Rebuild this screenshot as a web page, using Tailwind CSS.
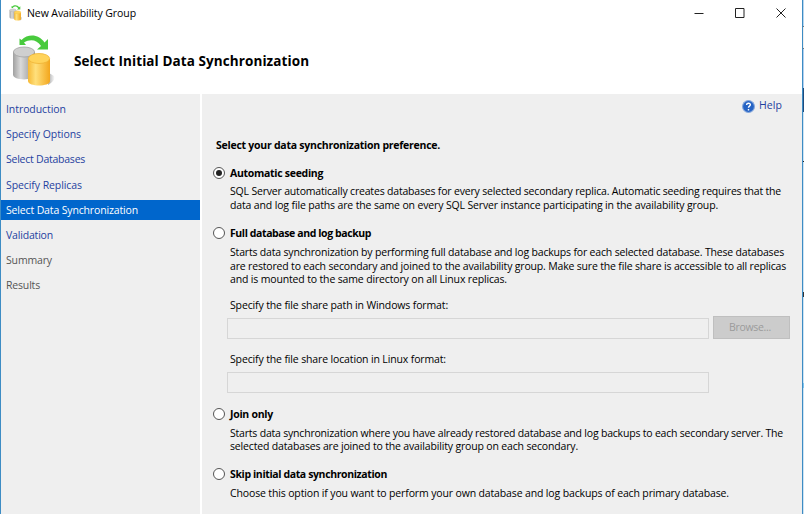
<!DOCTYPE html>
<html lang="en">
<head>
<meta charset="utf-8">
<title>New Availability Group</title>
<script src="https://cdn.jsdelivr.net/npm/@tailwindcss/browser@4"></script>
</head>
<body class="h-[514px] w-[804px] overflow-hidden bg-white font-['Open_Sans','Noto_Sans',sans-serif] text-[10.5px] leading-[13.5px] text-black">
<div class="flex h-[514px] w-[804px]">
  <div class="flex w-[803px] flex-col border-x border-[#3d8cc4]">
    <header class="flex h-[94px] flex-col bg-white">
      <div class="flex h-[26px] items-center">
        <svg class="ml-2 h-[16px] w-[14px]" viewBox="0 0 44 52"><use href="#db"/></svg>
        <h1 class="ml-[4px] mt-[2px] whitespace-nowrap tracking-[-0.08px]">New Availability Group</h1>
        <svg class="ml-auto mr-[14px] h-[12px] w-[94px]" viewBox="0 0 94 12" fill="none" stroke="#222" stroke-width="1"><path d="M0.500 6.500h9M41.500 1.500h8.500v9h-8.500zM82.500 1.500l9 9M91.500 1.500l-9 9"/></svg>
      </div>
      <div class="flex h-[68px] items-start">
        <svg class="ml-[11px] mt-[9px] h-[52px] w-[44px]" viewBox="0 0 44 52">
          <defs>
            <linearGradient id="g"><stop offset="0" stop-color="#a0a0a0"/><stop offset=".35" stop-color="#dadada"/><stop offset="1" stop-color="#8c8c8c"/></linearGradient>
            <linearGradient id="y"><stop offset="0" stop-color="#f6b936"/><stop offset=".35" stop-color="#ffe07c"/><stop offset="1" stop-color="#f3a61c"/></linearGradient>
            <linearGradient id="s"><stop offset="0" stop-color="#a8a8a8"/><stop offset="1" stop-color="#fff"/></linearGradient>
          </defs>
          <g id="db">
            <path d="M36 50Q45 44 42 41L37 38z" fill="url(#s)"/>
            <path d="M1 17v22.500c0 6.500 22 6.500 22 0V17z" fill="url(#g)"/>
            <ellipse cx="12" cy="17" rx="10.600" ry="5" fill="#cfcfcf" stroke="#a3a3a3" stroke-width=".8"/>
            <path d="M16 24v22c0 6 22 6 22 0V24z" fill="url(#y)"/>
            <ellipse cx="27" cy="23.500" rx="10.600" ry="5" fill="#ffd35a" stroke="#efb436" stroke-width=".8"/>
            <path d="M7.500 3.500v6.500h6.500l-2-2.500c6-4 13-3 17 3.500l-4 3.500H36V4l-3.500 3.500C27-1 16-1.500 9.500 5z" fill="#48ca3d"/>
          </g>
        </svg>
        <h2 class="ml-[18px] mt-[26px] whitespace-nowrap text-[13.5px] font-bold leading-[18px] tracking-[0.09px] text-black">Select Initial Data Synchronization</h2>
      </div>
    </header>
    <div class="flex h-[420px]">
      <nav class="flex w-[199px] shrink-0 flex-col gap-[5.2px] whitespace-nowrap bg-[#efefef] pt-[5px] leading-[20px] text-[#1f3fa0]">
        <a class="h-[20px] pl-[5px] tracking-[-0.07px]">Introduction</a>
        <a class="h-[20px] pl-[5px] tracking-[-0.07px]">Specify Options</a>
        <a class="h-[20px] pl-[5px] tracking-[-0.24px]">Select Databases</a>
        <a class="h-[20px] pl-[5px] tracking-[-0.08px]">Specify Replicas</a>
        <a class="h-[20px] bg-[#0066cc] pl-[5px] tracking-[-0.15px] text-white">Select Data Synchronization</a>
        <a class="h-[20px] pl-[5px] tracking-[-0.18px]">Validation</a>
        <a class="h-[20px] pl-[5px] tracking-[-0.15px] text-[#555]">Summary</a>
        <a class="h-[20px] pl-[5px] tracking-[-0.17px] text-[#555]">Results</a>
      </nav>
      <main class="ml-[2px] min-w-0 flex-1 whitespace-nowrap bg-[#efefef]">
        <div class="flex h-[24px] items-center justify-end pr-[20px] text-[#1f3fa0]">
          <svg class="mr-[4px] h-[13px] w-[13px]" viewBox="0 0 12 12"><circle cx="6" cy="6" r="5.500" fill="#2563c4" stroke="#87a9dd"/><path d="M4.200 4.600C4.300 2.300 8 2.500 7.700 4.600 7.500 5.700 6 5.700 6 7.200M6 8.300v1.300" stroke="#fff" stroke-width="1.300" fill="none"/></svg>
          <span class="tracking-[0.07px]">Help</span>
        </div>
        <h3 class="ml-[14px] mt-[19px] h-[16px] font-bold leading-[16px] tracking-[-0.25px] text-black">Select your data synchronization preference.</h3>
        <section class="ml-[11px] mt-[12px]">
          <h4 class="flex h-[16px] items-center font-bold leading-[16px] tracking-[-0.295px] text-black"><i class="mr-[5px] flex h-[12px] w-[12px] items-center justify-center rounded-full border border-[#555] bg-white"><b class="h-[6px] w-[6px] rounded-full bg-[#222]"></b></i>Automatic seeding</h4>
          <p class="ml-[17px] mt-[4px]"><span class="tracking-[-0.185px]">SQL Server automatically creates databases for every selected secondary replica. Automatic seeding requires that the</span><br><span class="tracking-[-0.145px]">data and log file paths are the same on every SQL Server instance participating in the availability group.</span></p>
        </section>
        <section class="ml-[11px] mt-[13px]">
          <h4 class="flex h-[16px] items-center font-bold leading-[16px] tracking-[-0.4px] text-black"><i class="mr-[5px] h-[12px] w-[12px] rounded-full border border-[#555] bg-white"></i>Full database and log backup</h4>
          <p class="ml-[17px] mt-[5px]"><span class="tracking-[-0.181px]">Starts data synchronization by performing full database and log backups for each selected database. These databases</span><br><span class="tracking-[-0.174px]">are restored to each secondary and joined to the availability group. Make sure the file share is accessible to all replicas</span><br><span class="tracking-[-0.154px]">and is mounted to the same directory on all Linux replicas.</span></p>
          <div class="ml-[17px] mt-[12px] h-[14px] tracking-[-0.137px]">Specify the file share path in Windows format:</div>
          <div class="ml-[14px] mt-[3px] flex h-[23px] items-end gap-[4px]">
            <div class="h-[21px] w-[482px] border border-[#d6d6d6]"></div>
            <button class="h-[23px] w-[77px] border border-[#bfbfbf] bg-[#cccccc] pr-[3px] pt-[1px] tracking-[-0.3px] text-[#9b9b9b]">Browse...</button>
          </div>
          <div class="ml-[17px] mt-[14px] h-[14px] tracking-[-0.14px]">Specify the file share location in Linux format:</div>
          <div class="ml-[14px] mt-[5px] h-[21px] w-[482px] border border-[#d6d6d6]"></div>
        </section>
        <section class="ml-[11px] mt-[13px]">
          <h4 class="flex h-[16px] items-center font-bold leading-[16px] tracking-[-0.27px] text-black"><i class="mr-[5px] h-[12px] w-[12px] rounded-full border border-[#555] bg-white"></i>Join only</h4>
          <p class="ml-[17px] mt-[5px]"><span class="tracking-[-0.202px]">Starts data synchronization where you have already restored database and log backups to each secondary server. The</span><br><span class="tracking-[-0.164px]">selected databases are joined to the availability group on each secondary.</span></p>
        </section>
        <section class="ml-[11px] mt-[12px]">
          <h4 class="flex h-[16px] items-center font-bold leading-[16px] tracking-[-0.37px] text-black"><i class="mr-[5px] h-[12px] w-[12px] rounded-full border border-[#555] bg-white"></i>Skip initial data synchronization</h4>
          <p class="ml-[17px] mt-[5px] tracking-[-0.14px]">Choose this option if you want to perform your own database and log backups of each primary database.</p>
        </section>
      </main>
    </div>
  </div>
  <!-- sliver of the window behind the dialog -->
  <div class="flex w-[1px] flex-col bg-[#cfe3f2]">
    <div class="h-[26px] bg-[#b9d6ee]"></div>
    <div class="h-[23px] border-y border-[#777] bg-[#eee]"></div>
    <div class="h-[39px] bg-[#b5d0ee]"></div>
    <div class="h-[24px] bg-[#1f4a7c]"></div>
    <div class="h-[50px] border-b border-[#222] bg-[#cfe3f2]"></div>
    <div class="mt-[130px] h-[5px] bg-[#333]"></div>
    <div class="mt-[86px] h-[5px] bg-[#7fc4ee]"></div>
  </div>
</div>
</body>
</html>
